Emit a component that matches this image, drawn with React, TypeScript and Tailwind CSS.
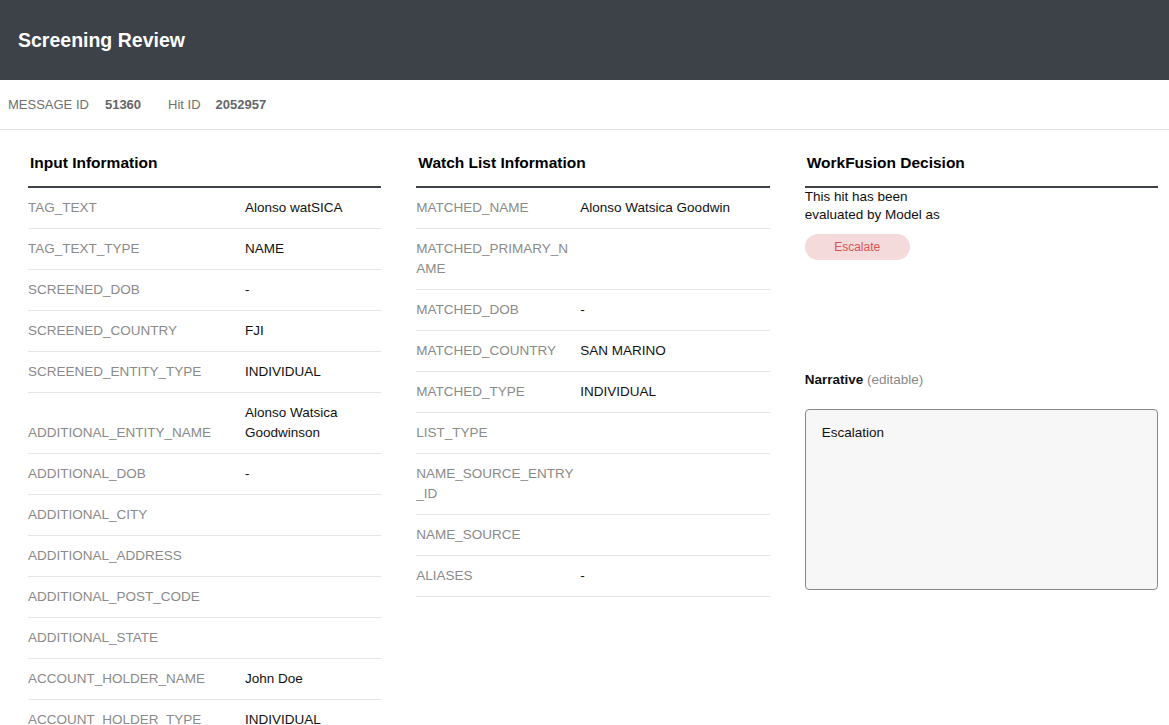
type Row = { label: string; value?: string };

const INPUT_ROWS: Row[] = [
  { label: "TAG_TEXT", value: "Alonso watSICA" },
  { label: "TAG_TEXT_TYPE", value: "NAME" },
  { label: "SCREENED_DOB", value: "-" },
  { label: "SCREENED_COUNTRY", value: "FJI" },
  { label: "SCREENED_ENTITY_TYPE", value: "INDIVIDUAL" },
  { label: "ADDITIONAL_ENTITY_NAME", value: "Alonso Watsica Goodwinson" },
  { label: "ADDITIONAL_DOB", value: "-" },
  { label: "ADDITIONAL_CITY" },
  { label: "ADDITIONAL_ADDRESS" },
  { label: "ADDITIONAL_POST_CODE" },
  { label: "ADDITIONAL_STATE" },
  { label: "ACCOUNT_HOLDER_NAME", value: "John Doe" },
  { label: "ACCOUNT_HOLDER_TYPE", value: "INDIVIDUAL" },
];

const WATCH_ROWS: Row[] = [
  { label: "MATCHED_NAME", value: "Alonso Watsica Goodwin" },
  { label: "MATCHED_PRIMARY_NAME" },
  { label: "MATCHED_DOB", value: "-" },
  { label: "MATCHED_COUNTRY", value: "SAN MARINO" },
  { label: "MATCHED_TYPE", value: "INDIVIDUAL" },
  { label: "LIST_TYPE" },
  { label: "NAME_SOURCE_ENTRY_ID" },
  { label: "NAME_SOURCE" },
  { label: "ALIASES", value: "-" },
];

function SectionTitle({ children }: { children: React.ReactNode }) {
  return (
    <h2 className="pt-[22px] pb-[12px] px-[2px] text-[15.5px] leading-[22px] font-bold text-black border-b-2 border-[#3d4249]">
      {children}
    </h2>
  );
}

function InfoTable({ rows, cols }: { rows: Row[]; cols: string }) {
  return (
    <div>
      {rows.map((row) => (
        <div
          key={row.label}
          className={`grid ${cols} items-end py-[10px] leading-5 text-[13.5px] border-b border-[#e6e6e6]`}
        >
          <span className="pr-[6px] text-[#8a8a8a] break-all">{row.label}</span>
          <span className="text-[#111]">{row.value ?? ""}</span>
        </div>
      ))}
    </div>
  );
}

export default function App() {
  return (
    <div className="min-h-screen bg-white font-['Liberation_Sans',Arial,sans-serif]">
      <header className="h-20 bg-[#3d4249] flex items-center px-[18px] pt-[2px]">
        <h1 className="text-white text-[19.5px] font-bold">Screening Review</h1>
      </header>

      <div className="h-[50px] flex items-center px-2 border-b border-[#e3e3e3] text-[13px]">
        <span className="text-[#707070]">MESSAGE ID</span>
        <span className="ml-[16px] font-bold text-[#666]">51360</span>
        <span className="ml-[27px] text-[#707070]">Hit ID</span>
        <span className="ml-[15px] font-bold text-[#666]">2052957</span>
      </div>

      <main className="grid grid-cols-3 gap-x-[35px] pl-7 pr-[11px]">
        <section>
          <SectionTitle>Input Information</SectionTitle>
          <InfoTable rows={INPUT_ROWS} cols="grid-cols-[217px_1fr]" />
        </section>

        <section>
          <SectionTitle>Watch List Information</SectionTitle>
          <InfoTable rows={WATCH_ROWS} cols="grid-cols-[164px_1fr]" />
        </section>

        <section>
          <SectionTitle>WorkFusion Decision</SectionTitle>
          <p className="w-[150px] text-[13.5px] leading-[18px] text-[#111]">
            This hit has been evaluated by Model as
          </p>
          <div className="mt-[10px] w-[105px] h-[26px] rounded-full bg-[#f4dadb] text-[#d9534f] text-xs flex items-center justify-center">
            Escalate
          </div>

          <div className="mt-[110px] text-[13.5px] leading-5">
            <span className="font-bold text-[#111]">Narrative</span>{" "}
            <span className="text-[#8a8a8a]">(editable)</span>
          </div>
          <div className="mt-[19px] h-[181px] rounded border border-[#8a8a8a] bg-[#f7f7f7] px-4 pt-[13px] text-[13.5px] leading-5 text-[#111]">
            Escalation
          </div>
        </section>
      </main>
    </div>
  );
}
